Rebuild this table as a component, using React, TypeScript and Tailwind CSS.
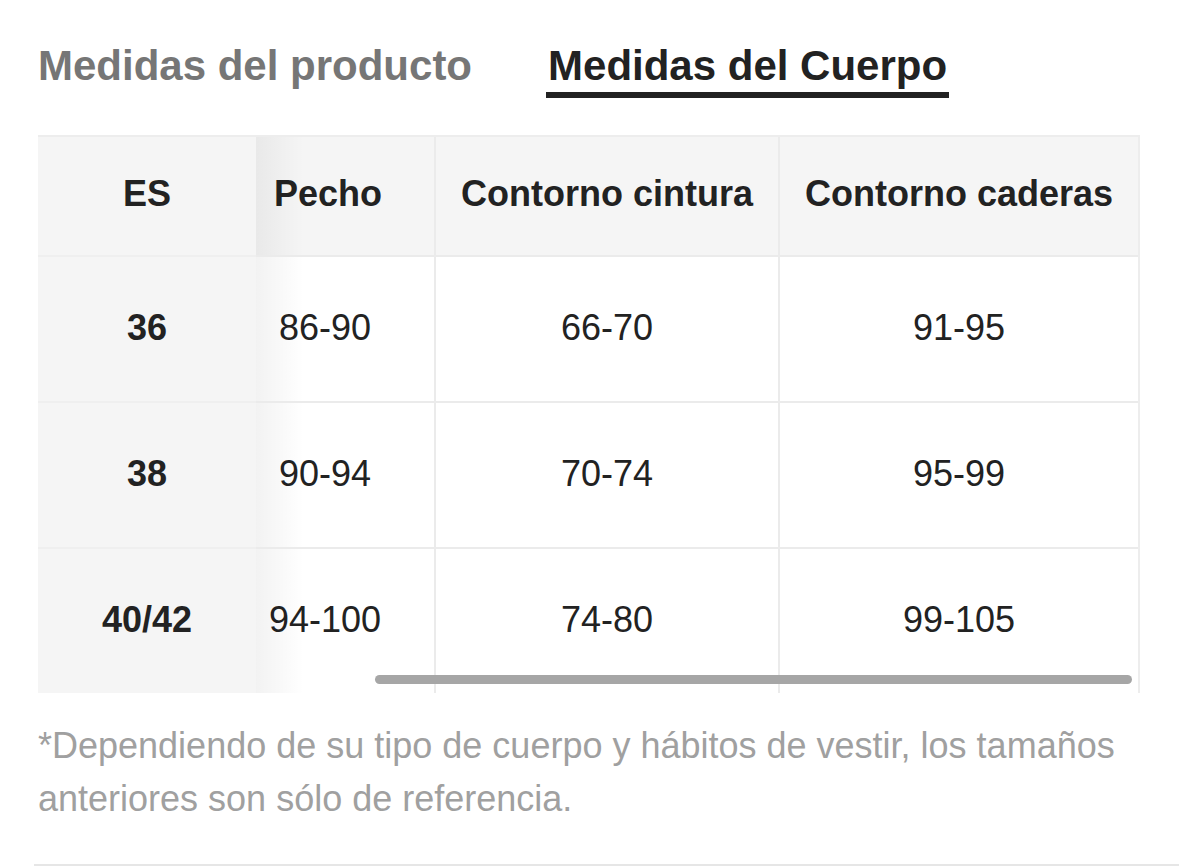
const rows = [
  { size: "36", pecho: "86-90", cintura: "66-70", caderas: "91-95" },
  { size: "38", pecho: "90-94", cintura: "70-74", caderas: "95-99" },
  { size: "40/42", pecho: "94-100", cintura: "74-80", caderas: "99-105" },
];

export default function App() {
  return (
    <div className="min-h-[867px] bg-white font-['Liberation_Sans',Arial,sans-serif] text-[#222]">
      <div className="pl-[38px] pr-[39px]">
        {/* tabs */}
        <div className="flex items-start gap-[76px] pt-[42px]">
          <div className="text-[42px] font-bold leading-[48px] text-[#767676]">Medidas del producto</div>
          <div className="flex flex-col">
            <div className="text-[42px] font-bold leading-[48px] text-[#222]">Medidas del Cuerpo</div>
            <div className="-mx-[2px] mt-[2px] h-[6px] bg-[#222]" />
          </div>
        </div>

        {/* table */}
        <div className="relative mt-[37px] w-[1102px] border-t-2 border-r-2 border-[#ededed]">
          <div className="grid grid-cols-[218px_180px_344px_358px]">
            <div className="relative z-10 flex h-[118px] items-center justify-center bg-[#f5f5f5] pb-[4px] text-[36px] font-bold">
              ES
              <div className="absolute left-full top-0 h-full w-[48px] bg-gradient-to-r from-black/[0.05] to-transparent" />
            </div>
            <div className="flex h-[118px] items-center justify-center border-r-2 border-[#ebebeb] bg-[#f5f5f5] pb-[4px] pl-[3px] pr-[37px] text-[36px] font-bold">
              Pecho
            </div>
            <div className="flex h-[118px] items-center justify-center border-r-2 border-[#ebebeb] bg-[#f5f5f5] pb-[4px] text-[36px] font-bold">
              Contorno cintura
            </div>
            <div className="flex h-[118px] items-center justify-center bg-[#f5f5f5] pb-[4px] text-[36px] font-bold">
              Contorno caderas
            </div>

            {rows.map((r) => (
              <>
                <div
                  key={r.size + "a"}
                  className="relative z-10 flex h-[146px] items-center justify-center border-t-2 border-[#efefef] bg-[#f5f5f5] pb-[2px] text-[36px] font-bold"
                >
                  {r.size}
                  <div className="absolute left-full top-0 h-full w-[48px] bg-gradient-to-r from-black/[0.05] to-transparent" />
                </div>
                <div
                  key={r.size + "b"}
                  className="flex h-[146px] items-center justify-center border-t-2 border-r-2 border-[#ebebeb] pb-[2px] pr-[40px] text-[36px]"
                >
                  {r.pecho}
                </div>
                <div
                  key={r.size + "c"}
                  className="flex h-[146px] items-center justify-center border-t-2 border-r-2 border-[#ebebeb] pb-[2px] text-[36px]"
                >
                  {r.cintura}
                </div>
                <div
                  key={r.size + "d"}
                  className="flex h-[146px] items-center justify-center border-t-2 border-[#ebebeb] pb-[2px] text-[36px]"
                >
                  {r.caderas}
                </div>
              </>
            ))}
          </div>
          <div className="absolute bottom-[9px] left-[337px] right-[6px] h-[9px] rounded-full bg-[#a6a6a6]" />
        </div>

        {/* note */}
        <p className="mt-[26px] text-[36px] leading-[53px] text-[#a0a0a0]">
          *Dependiendo de su tipo de cuerpo y hábitos de vestir, los tamaños anteriores son sólo de referencia.
        </p>
      </div>
      <div className="ml-[34px] mt-[39px] h-[2px] bg-[#e6e6e6]" />
    </div>
  );
}
